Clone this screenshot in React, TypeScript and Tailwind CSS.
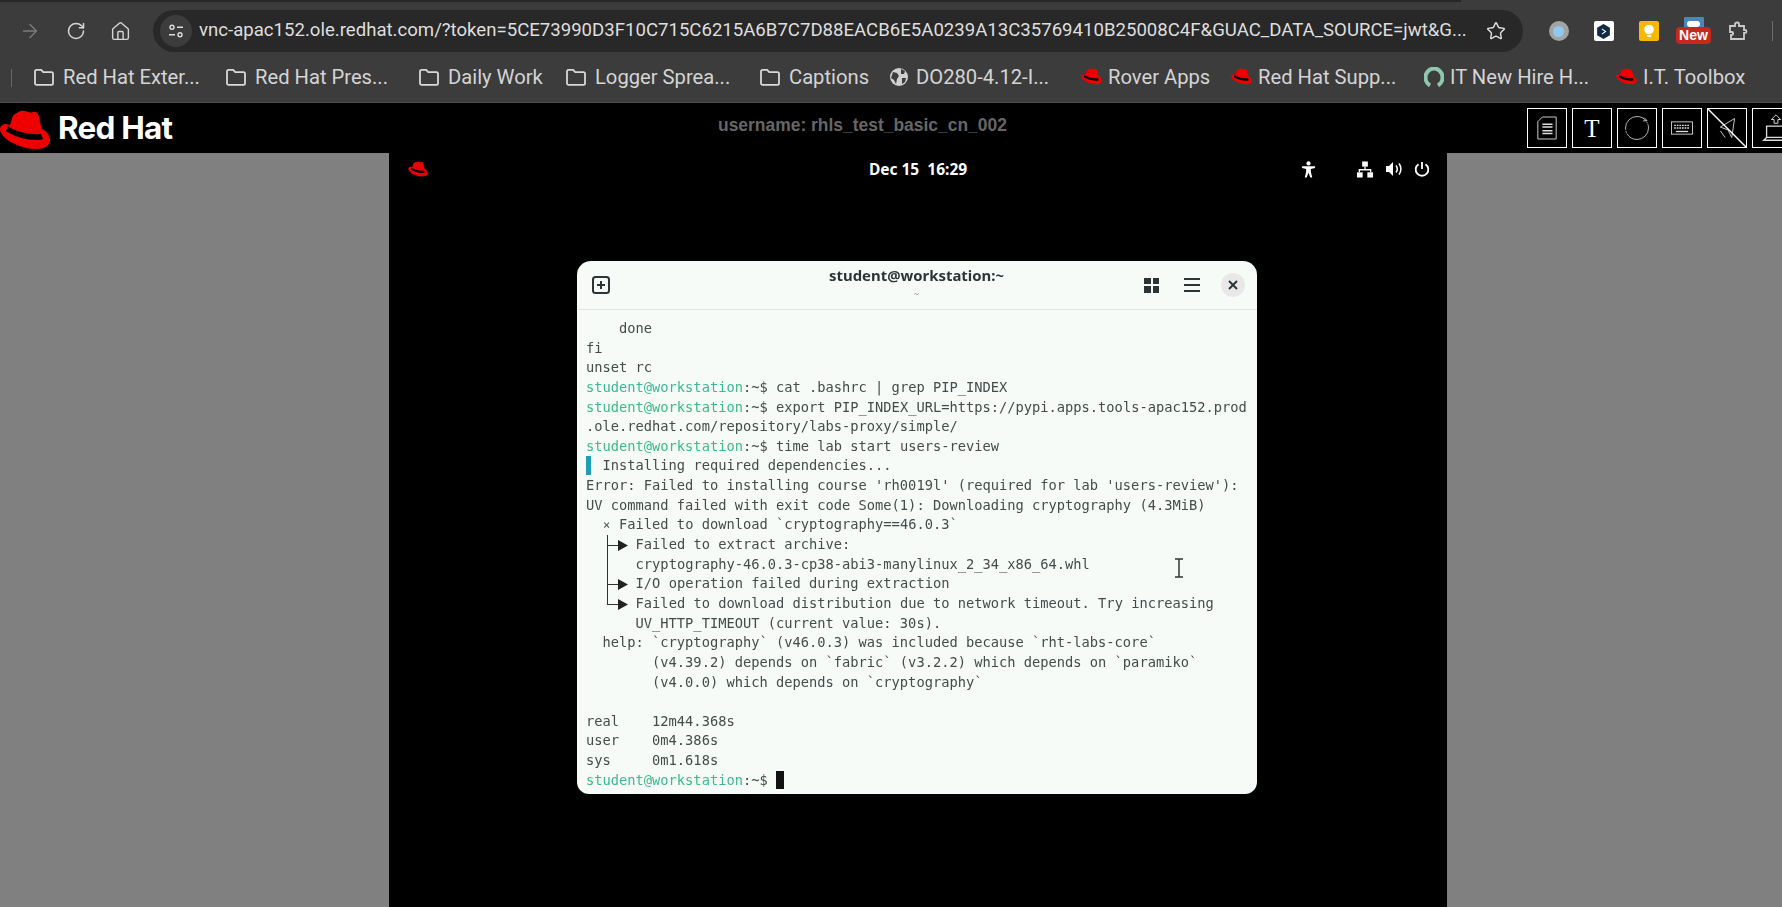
import { ArrowRight, Home, RotateCw, Star } from "lucide-react";
import React from "react";

const Hat = ({ className }: { className: string }) => (
  <svg viewBox="0 0 50 44" className={className}>
    <path
      d="M15 5c4-3 7-4 10-3 3 1 5 2 8 1 3-1 5 1 6 5 1 5 2 9 3 12 4 2 8 6 8 11 0 6-6 9-14 9-12 0-24-5-31-11-3-3-5-6-5-9 0-3 3-5 6-5l4 1 2-6c0-2 1-4 3-5z"
      fill="#ee0000"
    />
    <path
      d="M8 17c6 5 20 9 33 8l2 5c-2 1-4 1-7 1C24 31 11 26 6 22z"
      fill="#000"
    />
  </svg>
);

const bookmarks = [
  { label: "Red Hat Exter...", icon: "folder", width: "w-[192px]" },
  { label: "Red Hat Pres...", icon: "folder", width: "w-[193px]" },
  { label: "Daily Work", icon: "folder", width: "w-[147px]" },
  { label: "Logger Sprea...", icon: "folder", width: "w-[194px]" },
  { label: "Captions", icon: "folder", width: "w-[130px]" },
  { label: "DO280-4.12-I...", icon: "globe", width: "w-[192px]" },
  { label: "Rover Apps", icon: "hat", width: "w-[150px]" },
  { label: "Red Hat Supp...", icon: "hat", width: "w-[193px]" },
  { label: "IT New Hire H...", icon: "ring", width: "w-[192px]" },
  { label: "I.T. Toolbox", icon: "hat", width: "w-[140px]" },
];

const BookmarkIcon = ({ icon }: { icon: string }) => {
  if (icon === "folder") {
    return (
      <svg viewBox="0 0 22 20" className="h-[20px] w-[22px]" fill="none" stroke="#d8d8d8" strokeWidth="1.8">
        <path d="M2 4.5c0-1 .7-1.6 1.6-1.6h4.6l2 2.2h8.2c.9 0 1.6.7 1.6 1.6v9.6c0 .9-.7 1.6-1.6 1.6H3.600c-.9 0-1.600-.7-1.600-1.600z" />
      </svg>
    );
  }
  if (icon === "globe") {
    return (
      <svg viewBox="0 0 20 20" className="mr-[-1px] h-[20px] w-[20px]">
        <circle cx="10" cy="10" r="9" fill="#d0d0d0" />
        <path d="M4 5l4 1 2 3-2 3-1 5-2-4-3-2zM12 2l4 2-1 3-3 0zM13 11l4 0-1 4-3 2z" fill="#3c3c3c" />
      </svg>
    );
  }
  if (icon === "ring") {
    return (
      <svg viewBox="0 0 20 20" className="mr-[-2px] h-[20px] w-[20px]" fill="none">
        <path d="M6 18.500C3.500 17 1.500 14 1.500 10.500 1.500 5.500 5.500 1.500 10 1.500s8.500 4 8.500 9c0 3.500-2 6.500-4.500 8" stroke="#8fc6ae" strokeWidth="4" />
      </svg>
    );
  }
  return <Hat className="mr-[-2px] h-[18px] w-[21px]" />;
};

const ToolBox = ({ children }: { children: React.ReactNode }) => (
  <div className="flex h-[40px] w-[40px] shrink-0 items-center justify-center border border-white">{children}</div>
);

const P = ({ children }: { children: React.ReactNode }) => (
  <>
    <span className="text-[#3cb990]">student@workstation</span>:~$ {children}
  </>
);

// uv error tree, the box glyphs don't join up at this line height
const Tree = ({ kind }: { kind: "mid" | "bar" | "last" }) => (
  <span className="relative inline-block h-[19.650px] w-[24.800px] align-top">
    {kind === "last" ? (
      <span className="absolute left-[4px] top-0 h-[10px] w-[1px] bg-[#333]" />
    ) : (
      <span className="absolute left-[4px] top-0 h-[19.650px] w-[1px] bg-[#333]" />
    )}
    {kind !== "bar" && (
      <>
        <span className="absolute left-[4px] top-[10px] h-[1px] w-[12px] bg-[#333]" />
        <svg viewBox="0 0 10 11" className="absolute left-[15px] top-[5px] h-[11px] w-[10px]" fill="#222">
          <path d="M0 0l10 5.500L0 11z" />
        </svg>
      </>
    )}
  </span>
);

const termLines: React.ReactNode[] = [
  "    done",
  "fi",
  "unset rc",
  <P>cat .bashrc | grep PIP_INDEX</P>,
  <P>export PIP_INDEX_URL=https://pypi.apps.tools-apac152.prod</P>,
  ".ole.redhat.com/repository/labs-proxy/simple/",
  <P>time lab start users-review</P>,
  <>
    <span className="mr-[3.270px] inline-block h-[19px] w-[5px] bg-[#1f9db3] align-top" /> Installing required dependencies...
  </>,
  "Error: Failed to installing course 'rh0019l' (required for lab 'users-review'):",
  "UV command failed with exit code Some(1): Downloading cryptography (4.3MiB)",
  <>
    {"  "}
    <span className="inline-block w-[8.270px] text-center text-[12px]">×</span> Failed to download `cryptography==46.0.3`
  </>,
  <>
    {"  "}
    <Tree kind="mid" /> Failed to extract archive:
  </>,
  <>
    {"  "}
    <Tree kind="bar" /> cryptography-46.0.3-cp38-abi3-manylinux_2_34_x86_64.whl
  </>,
  <>
    {"  "}
    <Tree kind="mid" /> I/O operation failed during extraction
  </>,
  <>
    {"  "}
    <Tree kind="last" /> Failed to download distribution due to network timeout. Try increasing
  </>,
  "      UV_HTTP_TIMEOUT (current value: 30s).",
  "  help: `cryptography` (v46.0.3) was included because `rht-labs-core`",
  "        (v4.39.2) depends on `fabric` (v3.2.2) which depends on `paramiko`",
  "        (v4.0.0) which depends on `cryptography`",
  " ",
  "real    12m44.368s",
  "user    0m4.386s",
  "sys     0m1.618s",
  <>
    <P>
      <span className="inline-block h-[18px] w-[8px] bg-[#111] align-[-4px]" />
    </P>
  </>,
];

const App = () => {
  return (
    <div className="flex h-screen w-full flex-col overflow-hidden bg-[#808080] font-['Roboto',sans-serif]">
      {/* browser chrome */}
      <div className="flex h-[2px] shrink-0 bg-[#3c3c3c]">
        <div className="w-[1461px] bg-[#272727]" />
      </div>
      <div className="flex h-[50px] shrink-0 items-center bg-[#3c3c3c] pl-[7px] pt-[8px]">
        <div className="flex w-[46px] justify-center text-[#7b7b7b]">
          <ArrowRight size={22} strokeWidth={1.5} />
        </div>
        <div className="flex w-[45px] justify-center text-[#d6d6d6]">
          <RotateCw size={20} strokeWidth={1.8} />
        </div>
        <div className="flex w-[45px] justify-center text-[#d6d6d6]">
          <Home size={21} strokeWidth={1.6} />
        </div>
        <div className="ml-[10px] flex h-[42px] w-[1370px] shrink-0 items-center rounded-full bg-[#282828] pl-[7px] pr-[17px]">
          <div className="flex h-[32px] w-[32px] shrink-0 items-center justify-center rounded-full bg-[#3c3c3c]">
            <svg viewBox="0 0 16 16" className="h-[16px] w-[16px]" fill="none" stroke="#dcdcdc" strokeWidth="1.4">
              <circle cx="4" cy="4.200" r="2" />
              <path d="M9 4.200h6M1 11.800h6" />
              <circle cx="12" cy="11.800" r="2" />
            </svg>
          </div>
          <span className="ml-[7px] min-w-0 flex-1 whitespace-nowrap text-[18.600px] text-[#dedede]">
            vnc-apac152.ole.redhat.com/?token=5CE73990D3F10C715C6215A6B7C7D88EACB6E5A0239A13C35769410B25008C4F&amp;GUAC_DATA_SOURCE=jwt&amp;G...
          </span>
          <Star size={20} strokeWidth={1.7} className="shrink-0 text-[#e0e0e0]" />
        </div>
        <div className="ml-[13px] flex items-center">
          <div className="flex w-[45px] justify-center">
            <div className="flex h-[20px] w-[20px] items-center justify-center rounded-full bg-[#a3a3a3]">
              <div className="h-[11px] w-[11px] rounded-full bg-[#8fc9f2]" />
            </div>
          </div>
          <div className="flex w-[45px] justify-center">
            <div className="flex h-[20px] w-[20px] items-center justify-center rounded-[2px] bg-white">
              <svg viewBox="0 0 16 16" className="h-[17px] w-[17px]">
                <path d="M8 1l6 3.500v7L8 15z M8 1L2 4.500v7L8 15z" fill="#0f2b46" />
                <path d="M6.500 5.500L10 8l-3.500 2.500" fill="none" stroke="#fff" strokeWidth="1" />
              </svg>
            </div>
          </div>
          <div className="flex w-[45px] justify-center">
            <div className="flex h-[20px] w-[20px] items-center justify-center rounded-[2px] bg-[#fbb800]">
              <svg viewBox="0 0 16 16" className="h-[16px] w-[16px]" fill="#fff">
                <circle cx="8" cy="6.500" r="4.800" />
                <rect x="5.800" y="12" width="4.400" height="2" />
              </svg>
            </div>
          </div>
          <div className="relative flex h-[30px] w-[45px] justify-center">
            <div className="mt-[1px] h-[14px] w-[20px] rounded-[1px] bg-[#4b86b8]">
              <div className="mx-auto mt-[4px] h-[6px] w-[13px] rounded-full bg-white" />
            </div>
            <div className="absolute left-[5px] top-[11px] flex h-[17px] w-[35px] items-center justify-center rounded-[4px] bg-[#c5281c] font-['Liberation_Sans',sans-serif] text-[14px] font-bold text-white">
              New
            </div>
          </div>
          <div className="flex w-[44px] justify-center">
            <svg viewBox="0 0 20 20" className="h-[20px] w-[20px]" fill="none" stroke="#c9c9c9" strokeWidth="1.800">
              <path d="M2 5h5V3c0-2 4-2 4 0v2h5v4h1c2 0 2 3 0 3h-1v6H3v-4h1c1.500 0 1.500-3 0-3H2z" />
            </svg>
          </div>
          <div className="ml-[12px] h-[20px] w-[1px] bg-[#6e6e6e]" />
        </div>
      </div>
      <div className="flex h-[51px] shrink-0 items-center border-b border-[#4a4a4a] bg-[#3c3c3c] pt-[1px]">
        <div className="ml-[11px] mr-[21px] h-[18px] w-[1px] bg-[#666]" />
        {bookmarks.map((b) => (
          <div key={b.label} className={`flex shrink-0 items-center gap-[8px] ${b.width}`}>
            <BookmarkIcon icon={b.icon} />
            <span className="whitespace-nowrap text-[20.200px] text-[#d4d4d4]">{b.label}</span>
          </div>
        ))}
      </div>

      {/* guacamole header */}
      <div className="flex h-[50px] shrink-0 items-center bg-black">
        <Hat className="ml-[-1px] mt-[5px] h-[44px] w-[52px] shrink-0" />
        <span className="ml-[7px] w-[208px] shrink-0 font-['Inter',sans-serif] text-[31.500px] font-bold tracking-[-0.8px] text-white">
          Red Hat
        </span>
        <span className="ml-[452px] mb-[6px] w-[808px] shrink-0 font-['Liberation_Sans',sans-serif] text-[17.450px] font-bold text-[#666]">
          username: rhls_test_basic_cn_002
        </span>
        <div className="ml-[1px] flex gap-[5px]">
          <ToolBox>
            <svg viewBox="0 0 24 28" className="h-[26px] w-[22px]" fill="none" stroke="#ddd">
              <path d="M7 2h15v24H2V7z" />
              <path d="M7 10h11M7 13h11M7 17h11M7 20h11" strokeWidth="1.600" />
            </svg>
          </ToolBox>
          <ToolBox>
            <span className="font-['Liberation_Serif',serif] text-[25px] leading-none text-white">T</span>
          </ToolBox>
          <ToolBox>
            <svg viewBox="0 0 26 26" className="h-[26px] w-[26px]" fill="none" stroke="#ddd" strokeWidth="0.800">
              <circle cx="13" cy="13" r="11.500" strokeDasharray="30 1 2 1" />
              <path d="M20 2.500l3 3-4 .5" />
            </svg>
          </ToolBox>
          <ToolBox>
            <svg viewBox="0 0 26 16" className="h-[14px] w-[24px]" fill="none" stroke="#ddd">
              <rect x="1" y="1" width="24" height="14" />
              <path d="M4 5h18M4 8h18" strokeDasharray="2 1" strokeWidth="1.500" />
              <path d="M6 12h14" strokeWidth="1.500" />
            </svg>
          </ToolBox>
          <ToolBox>
            <svg viewBox="0 0 40 40" className="h-[38px] w-[38px]" fill="none" stroke="#ccc">
              <path d="M28 10l-3 20-4-8-8-3z" />
              <path d="M13 23l5 7" />
              <path d="M0 0l40 40" stroke="#fff" strokeWidth="1.500" />
            </svg>
          </ToolBox>
          <ToolBox>
            <svg viewBox="0 0 30 34" className="ml-[8px] h-[32px] w-[30px] shrink-0" fill="none" stroke="#ddd">
              <path d="M10 8l5-5 5 5h-3v4h-4V8z" />
              <path d="M5 15h20v12H5zM2 30l3-3h20l3 3z" strokeWidth="1.400" />
            </svg>
          </ToolBox>
        </div>
      </div>

      {/* remote desktop */}
      <div className="flex min-h-0 flex-1">
        <div className="w-[389px] shrink-0 bg-[#808080]" />
        <div className="flex w-[1058px] shrink-0 flex-col bg-black">
          <div className="flex h-[32px] shrink-0 items-center pl-[19px] pr-[17px] text-white">
            <Hat className="h-[17px] w-[20px]" />
            <span className="ml-[380px] mt-[1px] w-[220px] text-center font-['Noto_Sans',sans-serif] text-[15.500px] font-bold">
              Dec 15&nbsp;&nbsp;16:29
            </span>
            <svg viewBox="0 0 16 18" className="ml-[273px] h-[17px] w-[15px]" fill="#fff">
              <circle cx="8" cy="2.500" r="2.200" />
              <path d="M1 5.500h14v2l-4.500 1v3l1.500 6h-2l-2-5-2 5H4l1.500-6v-3L1 7.500z" />
            </svg>
            <svg viewBox="0 0 18 18" className="ml-[40px] h-[17px] w-[18px]" fill="#fff">
              <rect x="6" y="0.500" width="6" height="5.500" />
              <rect x="0.500" y="12" width="6" height="5.500" />
              <rect x="11.500" y="12" width="6" height="5.500" />
              <path d="M8.300 6h1.400v2.500h6V12h-1.400V10H3.700v2H2.300V8.500h6z" />
            </svg>
            <svg viewBox="0 0 18 16" className="ml-[11px] h-[16px] w-[18px]" fill="#fff">
              <path d="M1 5h3l4-4v14l-4-4H1z" />
              <path d="M11 4.500c1.500 2 1.500 5 0 7M14 2.500c2.500 3 2.500 8 0 11" fill="none" stroke="#fff" strokeWidth="1.500" />
            </svg>
            <svg viewBox="0 0 16 16" className="ml-[11px] h-[16px] w-[16px]" fill="none" stroke="#fff" strokeWidth="1.800">
              <path d="M8 1v7" />
              <path d="M4.500 3.200a6.300 6.300 0 1 0 7 0" />
            </svg>
          </div>

          {/* terminal window */}
          <div className="ml-[188px] mt-[76px] w-[680px] overflow-hidden rounded-t-[14px] rounded-b-[12px] bg-[#f6fbf8] blur-[0.3px]">
            <div className="flex h-[49px] items-center border-b border-[#e2e6e3] pl-[15px] pr-[12px]">
              <svg viewBox="0 0 18 18" className="h-[18px] w-[18px] shrink-0" fill="none" stroke="#2e3436" strokeWidth="2">
                <rect x="1" y="1" width="16" height="16" rx="2.500" />
                <path d="M9 5v8M5 9h8" />
              </svg>
              <div className="flex flex-1 flex-col items-center pl-[79px]">
                <span className="mt-[-6px] font-['Noto_Sans',sans-serif] text-[14.900px] font-bold leading-[20px] text-[#2e3436]">
                  student@workstation:~
                </span>
                <span className="mt-[4px] text-[8px] leading-[10px] text-[#888]">~</span>
              </div>
              <div className="grid h-[15px] w-[15px] shrink-0 grid-cols-2 gap-[2px]">
                <div className="bg-[#2e3436]" />
                <div className="bg-[#2e3436]" />
                <div className="bg-[#2e3436]" />
                <div className="bg-[#2e3436]" />
              </div>
              <div className="ml-[25px] flex w-[16px] shrink-0 flex-col gap-[4px]">
                <div className="h-[2px] bg-[#2e3436]" />
                <div className="h-[2px] bg-[#2e3436]" />
                <div className="h-[2px] bg-[#2e3436]" />
              </div>
              <div className="ml-[21px] flex h-[24px] w-[24px] shrink-0 items-center justify-center rounded-full bg-[#e8e8e8]">
                <svg viewBox="0 0 10 10" className="h-[10px] w-[10px]" stroke="#2e3436" strokeWidth="2">
                  <path d="M1 1l8 8M9 1l-8 8" />
                </svg>
              </div>
            </div>
            <div className="relative pb-[4px] pl-[9px] pt-[9px] font-['DejaVu_Sans_Mono',monospace] text-[13.730px] leading-[19.650px] text-[#454c4a]">
              {termLines.map((line, i) => (
                <div key={i} className="h-[19.650px] whitespace-pre">
                  {line}
                </div>
              ))}
              {/* mouse pointer */}
              <svg viewBox="0 0 10 20" className="absolute left-[597px] top-[248px] h-[20px] w-[10px]" fill="none" stroke="#333" strokeWidth="1.500">
                <path d="M1 1h8M5 1v18M1 19h8" />
              </svg>
            </div>
          </div>
        </div>
        <div className="flex-1 bg-[#808080]" />
      </div>
    </div>
  );
};

export default App;
